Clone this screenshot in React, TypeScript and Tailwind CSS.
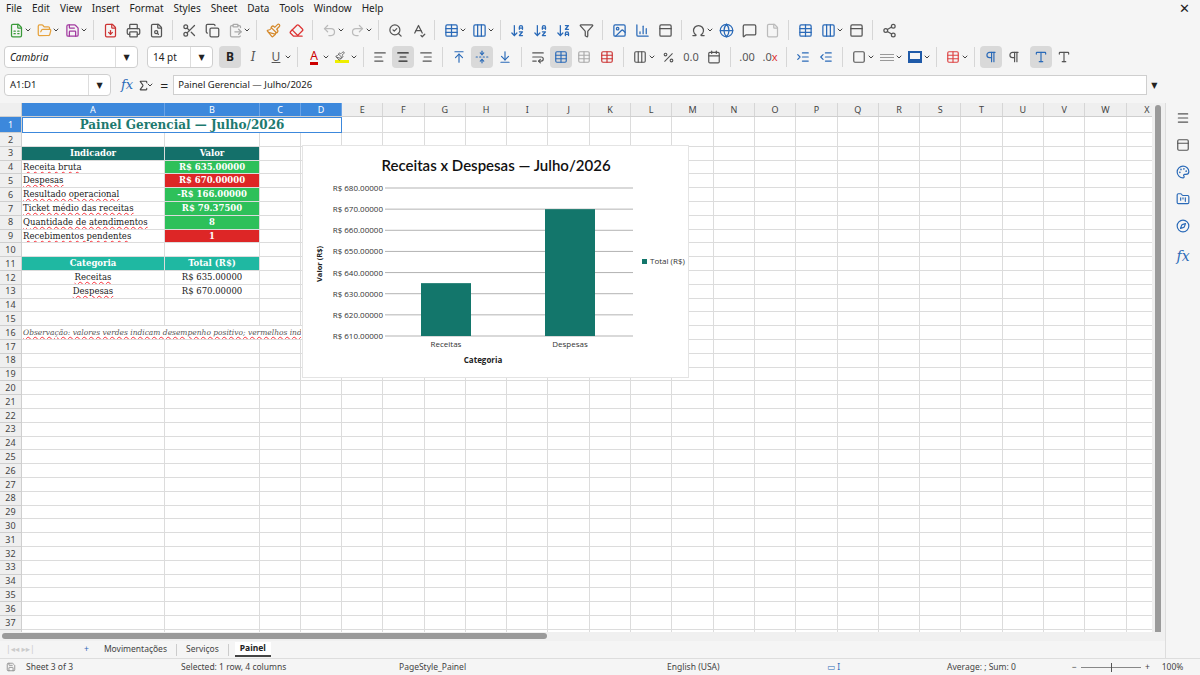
import React from "react";
import {
  FileSpreadsheet, FolderOpen, Save, FileDown, Printer, FileSearch, Scissors, Copy, ClipboardPaste,
  Paintbrush, Eraser, Undo2, Redo2, SearchCheck, SpellCheck, Table, Columns3, ArrowDownAZ, ArrowDownZA,
  Filter, Image, BarChart3, Omega, Globe, MessageSquare, File, PanelTop, Share2, ChevronDown,
  AlignLeft, AlignCenter, AlignRight, ArrowUpToLine, FoldVertical, ArrowDownToLine, WrapText,
  Percent, Calendar, IndentIncrease, IndentDecrease, Square, Menu, Palette, FolderKanban, Compass,
  Sigma, Pilcrow, Type,
} from "lucide-react";

const ui = { fontFamily: '"Noto Sans", "DejaVu Sans", sans-serif' };
const serif = { fontFamily: '"DejaVu Serif", "Liberation Serif", serif' };

const cols = [
  ["A", 143], ["B", 95], ["C", 41], ["D", 41],
  ...["E", "F", "G", "H", "I", "J", "K", "L", "M", "N", "O", "P", "Q", "R", "S", "T", "U", "V", "W", "X"].map((c) => [c, 41.3]),
] as [string, number][];

type Cell = { t?: string; cls?: string };
const wavy = "underline decoration-wavy decoration-red-500";
const rowData: Record<number, Cell[]> = {
  3: [{ t: "Indicador", cls: "bg-[#14706a] text-white font-bold text-center" }, { t: "Valor", cls: "bg-[#14706a] text-white font-bold text-center" }],
  4: [{ t: "Receita bruta", cls: wavy }, { t: "R$ 635.00000", cls: "bg-[#2ec05a] text-white font-bold text-center" }],
  5: [{ t: "Despesas", cls: wavy }, { t: "R$ 670.00000", cls: "bg-[#dd2626] text-white font-bold text-center" }],
  6: [{ t: "Resultado operacional", cls: wavy }, { t: "-R$ 166.00000", cls: "bg-[#2ec05a] text-white font-bold text-center" }],
  7: [{ t: "Ticket médio das receitas", cls: wavy }, { t: "R$ 79.37500", cls: "bg-[#2ec05a] text-white font-bold text-center" }],
  8: [{ t: "Quantidade de atendimentos", cls: wavy }, { t: "8", cls: "bg-[#2ec05a] text-white font-bold text-center" }],
  9: [{ t: "Recebimentos pendentes", cls: wavy }, { t: "1", cls: "bg-[#dd2626] text-white font-bold text-center" }],
  11: [{ t: "Categoria", cls: "bg-[#1fb8a2] text-white font-bold text-center" }, { t: "Total (R$)", cls: "bg-[#1fb8a2] text-white font-bold text-center" }],
  12: [{ t: "Receitas", cls: "text-center " + wavy }, { t: "R$ 635.00000", cls: "text-center" }],
  13: [{ t: "Despesas", cls: "text-center " + wavy }, { t: "R$ 670.00000", cls: "text-center" }],
};

const I = ({ children }: { children: React.ReactNode }) => (
  <span className="flex items-center justify-center w-[22px] h-[22px] text-[#555]">{children}</span>
);
const Dd = () => <ChevronDown size={8} className="text-[#444] -ml-1" strokeWidth={3} />;
const Sep = () => <span className="w-px h-5 bg-[#d6d6d6] mx-1" />;

function Chart() {
  const ticks = [680, 670, 660, 650, 640, 630, 620, 610];
  const top = 42, h = 148;
  const y = (v: number) => top + ((680 - v) / 70) * h;
  return (
    <div className="absolute left-[302px] top-[42px] w-[387px] h-[233px] bg-white border border-[#e4e4e4]" style={{ fontFamily: '"Open Sans", "Noto Sans", sans-serif' }}>
      <svg width="387" height="233" className="absolute inset-0">
        <text x="193" y="25" textAnchor="middle" fontSize="15" fontWeight="600" fill="#111" fontFamily="Lato, 'Open Sans', sans-serif">Receitas x Despesas — Julho/2026</text>
        {ticks.map((t) => (
          <g key={t}>
            <line x1="82" x2="330" y1={y(t)} y2={y(t)} stroke="#b3b3b3" strokeWidth="1" />
            <text x="80" y={y(t) + 3} textAnchor="end" fontSize="8" fill="#333">R$ {t}.00000</text>
          </g>
        ))}
        <rect x="118" y={y(635)} width="50" height={y(610) - y(635)} fill="#13766b" />
        <rect x="242" y={y(670)} width="50" height={y(610) - y(670)} fill="#13766b" />
        <text x="143" y="201" textAnchor="middle" fontSize="8" fill="#333">Receitas</text>
        <text x="267" y="201" textAnchor="middle" fontSize="8" fill="#333">Despesas</text>
        <text x="180" y="217" textAnchor="middle" fontSize="8" fontWeight="700" fill="#222">Categoria</text>
        <text transform="translate(19,118) rotate(-90)" textAnchor="middle" fontSize="7.5" fontWeight="700" fill="#222">Valor (R$)</text>
        <rect x="339" y="113" width="5" height="5" fill="#13766b" />
        <text x="347" y="118" fontSize="8" fill="#333">Total (R$)</text>
      </svg>
    </div>
  );
}

export default function App() {
  const rows = Array.from({ length: 38 }, (_, i) => i + 1);
  return (
    <div className="w-[1200px] h-[675px] bg-[#f5f5f5] flex flex-col overflow-hidden text-[#222]" style={ui}>
      {/* menu */}
      <div className="h-[17px] flex items-center text-[10px] px-[6px] gap-[10px]">
        {["File", "Edit", "View", "Insert", "Format", "Styles", "Sheet", "Data", "Tools", "Window", "Help"].map((m) => <span key={m}>{m}</span>)}
        <span className="ml-auto pr-1 text-[13px]">✕</span>
      </div>
      {/* toolbar 1 */}
      <div className="h-[26px] flex items-center px-[5px] gap-[1px]">
        <I><FileSpreadsheet size={15} className="text-[#3a9a3a]" /></I><Dd />
        <I><FolderOpen size={15} className="text-[#e6a23c]" /></I><Dd />
        <I><Save size={15} className="text-[#a23aa0]" /></I><Dd /><Sep />
        <I><FileDown size={15} className="text-[#c33]" /></I><I><Printer size={15} /></I><I><FileSearch size={15} /></I><Sep />
        <I><Scissors size={15} /></I><I><Copy size={15} /></I><I><ClipboardPaste size={15} className="text-[#aaa]" /></I><Dd /><Sep />
        <I><Paintbrush size={15} className="text-[#d68a2c]" /></I><I><Eraser size={15} className="text-[#d33]" /></I><Sep />
        <I><Undo2 size={15} className="text-[#bbb]" /></I><Dd /><I><Redo2 size={15} className="text-[#bbb]" /></I><Dd /><Sep />
        <I><SearchCheck size={15} /></I><I><SpellCheck size={15} /></I><Sep />
        <I><Table size={15} className="text-[#2a6ab8]" /></I><Dd /><I><Columns3 size={15} className="text-[#2a6ab8]" /></I><Dd /><Sep />
        <I><ArrowDownAZ size={15} className="text-[#2a6ab8]" /></I><I><ArrowDownAZ size={15} className="text-[#2a6ab8]" /></I><I><ArrowDownZA size={15} className="text-[#2a6ab8]" /></I><I><Filter size={15} /></I><Sep />
        <I><Image size={15} className="text-[#2a6ab8]" /></I><I><BarChart3 size={15} className="text-[#2a6ab8]" /></I><I><PanelTop size={15} /></I><Sep />
        <I><Omega size={15} /></I><Dd /><I><Globe size={15} className="text-[#2a6ab8]" /></I><I><MessageSquare size={15} /></I><I><File size={15} className="text-[#bbb]" /></I><Sep />
        <I><Table size={15} className="text-[#2a6ab8]" /></I><I><Columns3 size={15} className="text-[#2a6ab8]" /></I><Dd /><I><PanelTop size={15} /></I><Sep />
        <I><Share2 size={15} /></I>
      </div>
      {/* toolbar 2 */}
      <div className="h-[28px] flex items-center px-[4px] gap-[1px]">
        <div className="w-[134px] h-[22px] bg-white border border-[#cfcfcf] rounded-sm flex items-center text-[10px] italic pl-[5px]">
          <span className="flex-1">Cambria</span><span className="w-[22px] border-l border-[#ddd] h-full flex items-center justify-center not-italic text-[8px]">▼</span>
        </div>
        <div className="w-[66px] h-[22px] ml-[8px] bg-white border border-[#cfcfcf] rounded-sm flex items-center text-[10px] pl-[5px]">
          <span className="flex-1">14 pt</span><span className="w-[22px] border-l border-[#ddd] h-full flex items-center justify-center text-[8px]">▼</span>
        </div>
        <span className="ml-[5px] w-[22px] h-[22px] bg-[#d9d9d9] rounded flex items-center justify-center text-[12px] font-bold">B</span>
        <I><span className="text-[12px] italic" style={serif}>I</span></I>
        <I><span className="text-[12px] underline">U</span></I><Dd /><Sep />
        <I><span className="text-[12px] border-b-[3px] border-[#c00] leading-[12px] text-[#c00]">A</span></I><Dd />
        <I><span className="w-[14px] h-[12px] border-b-[3px] border-[#ee0]"><Paintbrush size={10} /></span></I><Dd /><Sep />
        <I><AlignLeft size={14} /></I>
        <span className="w-[22px] h-[22px] bg-[#d9d9d9] rounded flex items-center justify-center"><AlignCenter size={14} /></span>
        <I><AlignRight size={14} /></I><Sep />
        <I><ArrowUpToLine size={14} className="text-[#2a6ab8]" /></I>
        <span className="w-[22px] h-[22px] bg-[#d9d9d9] rounded flex items-center justify-center"><FoldVertical size={14} className="text-[#2a6ab8]" /></span>
        <I><ArrowDownToLine size={14} className="text-[#2a6ab8]" /></I><Sep />
        <I><WrapText size={14} /></I>
        <span className="w-[22px] h-[22px] bg-[#d9d9d9] rounded flex items-center justify-center"><Table size={14} className="text-[#2a6ab8]" /></span>
        <I><Table size={14} className="text-[#aaa]" /></I><I><Table size={14} className="text-[#c33]" /></I><Sep />
        <I><Columns3 size={14} /></I><Dd />
        <I><Percent size={13} /></I><I><span className="text-[11px]">0.0</span></I><I><Calendar size={14} /></I><Sep />
        <I><span className="text-[11px]">.00</span></I><I><span className="text-[11px]">.0<span className="text-[#d33]">x</span></span></I><Sep />
        <I><IndentIncrease size={14} className="text-[#2a6ab8]" /></I><I><IndentDecrease size={14} className="text-[#2a6ab8]" /></I><Sep />
        <I><Square size={14} /></I><Dd /><I><span className="w-[14px] flex flex-col gap-[2px]"><span className="h-px bg-[#999]" /><span className="h-px bg-[#999]" /><span className="h-px bg-[#999]" /></span></I><Dd />
        <I><span className="w-[14px] h-[12px] border-2 border-[#1f5aa8] border-b-4" /></I><Dd /><Sep />
        <I><Table size={14} className="text-[#d44]" /></I><Dd /><Sep />
        <span className="w-[22px] h-[22px] bg-[#d9d9d9] rounded flex items-center justify-center"><Pilcrow size={14} className="text-[#2a6ab8]" /></span>
        <I><Pilcrow size={14} /></I>
        <span className="ml-[4px] w-[22px] h-[22px] bg-[#d9d9d9] rounded flex items-center justify-center"><Type size={14} className="text-[#2a6ab8]" /></span>
        <I><Type size={14} /></I>
      </div>
      {/* formula bar */}
      <div className="h-[28px] flex items-center px-[4px] text-[9.5px]">
        <div className="w-[107px] h-[22px] bg-white border border-[#cfcfcf] rounded-sm flex items-center pl-[5px]">
          <span className="flex-1">A1:D1</span><span className="w-[22px] border-l border-[#ddd] h-full flex items-center justify-center text-[8px]">▼</span>
        </div>
        <span className="ml-[10px] text-[#2a6ab8] italic text-[13px]" style={serif}>fx</span>
        <Sigma size={13} className="ml-[4px] text-[#444]" /><Dd />
        <span className="ml-[6px] text-[14px]">=</span>
        <div className="ml-[5px] w-[974px] h-[20px] bg-white border border-[#cfcfcf] flex items-center pl-[4px]">Painel Gerencial — Julho/2026</div>
        <span className="ml-[4px] text-[8px]">▼</span>
      </div>
      {/* sheet area */}
      <div className="flex flex-1 min-h-0 mt-[4px]">
        <div className="flex flex-col w-[1165px]">
          <div className="flex flex-1 min-h-0">
            <div className="relative w-[1152px] overflow-hidden bg-white">
              <div className="flex h-[14px] text-[9px] bg-[#efefef] border-b border-[#cfcfcf]">
                <div className="w-[22px] shrink-0 border-r border-[#cfcfcf]" />
                {cols.map(([c, w], i) => (
                  <div key={c} style={{ width: w }} className={`shrink-0 flex items-center justify-center border-r ${i < 4 ? "bg-[#3c88dc] text-white border-[#6aa3e6]" : "border-[#d6d6d6] text-[#444]"}`}>{c}</div>
                ))}
              </div>
              {rows.map((r) => {
                const data = rowData[r] || [];
                return (
                  <div key={r} className={`flex ${r === 1 ? "h-[16px]" : "h-[13.8px]"}`}>
                    <div className={`w-[22px] shrink-0 text-[9px] flex items-center justify-center border-r border-b border-[#cfcfcf] ${r === 1 ? "bg-[#3c88dc] text-white" : "bg-[#efefef] text-[#444]"}`}>{r}</div>
                    {r === 1 ? (
                      <>
                        <div className="w-[320px] shrink-0 border border-[#3c88dc] flex items-center justify-center text-[12px] font-bold text-[#1d7a70]" style={serif}>Painel Gerencial — Julho/2026</div>
                        {cols.slice(4).map(([c, w]) => <div key={c} style={{ width: w }} className="shrink-0 border-r border-b border-[#dcdcdc]" />)}
                      </>
                    ) : r === 16 ? (
                      <>
                        <div className="w-[279px] shrink-0 overflow-hidden whitespace-nowrap text-[7.5px] italic text-[#555] underline decoration-wavy decoration-red-500 pl-[1px] flex items-center border-b border-[#dcdcdc]" style={serif}>Observação: valores verdes indicam desempenho positivo; vermelhos indicam despesas acima</div>
                        {cols.slice(3).map(([c, w]) => <div key={c} style={{ width: w }} className="shrink-0 border-r border-b border-[#dcdcdc]" />)}
                      </>
                    ) : (
                      cols.map(([c, w], i) => {
                        const d = data[i];
                        return (
                          <div key={c} style={{ width: w, ...serif }} className={`shrink-0 border-r border-b border-[#dcdcdc] text-[8.5px] whitespace-nowrap overflow-hidden flex items-center px-[1px] ${d?.cls?.includes("text-center") ? "justify-center" : ""} ${d?.cls ?? ""}`}>{d?.t}</div>
                        );
                      })
                    )}
                  </div>
                );
              })}
              <Chart />
            </div>
            <div className="w-[13px] bg-[#f0f0f0] relative">
              <div className="absolute left-[3px] top-[2px] w-[6px] h-[530px] rounded bg-[#9a9a9a]" />
            </div>
          </div>
          <div className="h-[9px] bg-[#f0f0f0] relative">
            <div className="absolute left-[2px] top-[1px] w-[545px] h-[6px] rounded bg-[#9a9a9a]" />
          </div>
          <div className="h-[17px] flex items-center text-[8.5px] text-[#444]">
            <span className="text-[#ccc] ml-[6px] w-[60px] whitespace-nowrap">|◂◂ ▸▸|</span>
            <span className="ml-[18px] text-[#2a6ab8]">+</span>
            <span className="ml-[12px] px-[3px]">Movimentações</span>
            <span className="w-px h-3 bg-[#ccc] mx-[6px]" />
            <span className="px-[3px]">Serviços</span>
            <span className="w-px h-3 bg-[#ccc] mx-[6px]" />
            <span className="px-[5px] font-bold text-[#222] border-b-2 border-[#444] bg-white">Painel</span>
          </div>
        </div>
        <div className="w-[35px] border-l border-[#ddd] flex flex-col items-center pt-[8px] gap-[13px] text-[#555]">
          <Menu size={14} />
          <PanelTop size={14} />
          <Palette size={14} className="text-[#2a6ab8]" />
          <FolderKanban size={14} className="text-[#2a6ab8]" />
          <Compass size={14} className="text-[#2a6ab8]" />
          <span className="italic text-[#2a6ab8] text-[14px]" style={serif}>fx</span>
        </div>
      </div>
      <div className="h-[17px] flex items-center text-[8.5px] text-[#444] border-t border-[#ddd]">
        <Save size={10} className="ml-[6px] text-[#888]" />
        <span className="ml-[10px] w-[155px]">Sheet 3 of 3</span>
        <span className="w-[218px]">Selected: 1 row, 4 columns</span>
        <span className="w-[268px]">PageStyle_Painel</span>
        <span className="w-[160px]">English (USA)</span>
        <span className="w-[120px] text-[#2a6ab8]">▭ I</span>
        <span className="w-[125px]">Average: ; Sum: 0</span>
        <span className="flex items-center gap-[4px]">− <span className="w-[60px] h-px bg-[#888] relative"><span className="absolute left-[30px] -top-[4px] w-px h-[9px] bg-[#555]" /></span> + <span className="ml-[8px]">100%</span></span>
      </div>
    </div>
  );
}
